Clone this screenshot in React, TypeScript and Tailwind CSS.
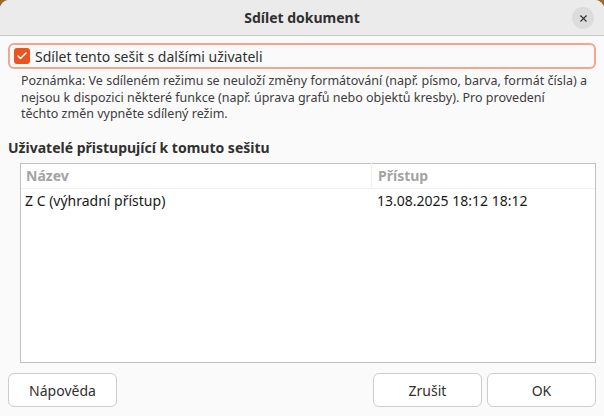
import { X, Check } from "lucide-react";

const font = { fontFamily: '"Noto Sans", "DejaVu Sans", sans-serif' };

const App = () => {
  return (
    <div className="w-[604px] h-[416px] bg-[#9c6a2c]" style={font}>
      <div className="flex h-full flex-col overflow-hidden rounded-t-[9px] bg-[#fafafa] text-[#3d3d3d]">
        {/* Title bar */}
        <div className="relative flex h-[36px] shrink-0 items-center justify-center border-b border-[#c9c9c9] bg-[#ebebeb]">
          <span className="text-[14px] font-bold text-[#303030]">Sdílet dokument</span>
          <button className="absolute right-[10px] top-[7px] flex h-[22px] w-[22px] items-center justify-center rounded-full bg-[#dcdcdc]">
            <X size={11} strokeWidth={2.4} className="text-[#333]" />
          </button>
        </div>

        <div className="flex flex-1 flex-col px-[8px] pt-[7px] pb-[9px]">
          {/* Share checkbox */}
          <label className="flex h-[26px] items-center gap-[5px] rounded-[6px] border-2 border-[#f2a78c] pl-[4px]">
            <span className="flex h-[16px] w-[16px] items-center justify-center rounded-[3px] bg-[#e95420]">
              <Check size={12} strokeWidth={3} className="text-white" />
            </span>
            <span className="text-[14px] text-[#303030]">Sdílet tento sešit s dalšími uživateli</span>
          </label>

          <p className="mt-[4px] pl-[13px] text-[12.5px] leading-[16.5px] text-[#3d3d3d]">
            Poznámka: Ve sdíleném režimu se neuloží změny formátování (např. písmo, barva, formát čísla) a
            <br />
            nejsou k dispozici některé funkce (např. úprava grafů nebo objektů kresby). Pro provedení
            <br />
            těchto změn vypněte sdílený režim.
          </p>

          <h2 className="mt-[14px] text-[14px] font-bold text-[#303030]">
            Uživatelé přistupující k tomuto sešitu
          </h2>

          {/* Users table */}
          <div className="ml-[12px] mt-[5px] h-[200px] border border-[#c0c0c0] bg-white">
            <div className="flex h-[25px] items-center border-b border-[#f2f2f2] text-[14px] font-bold text-[#a3a3a3]">
              <div className="w-[351px] border-r border-[#f0f0f0] pl-[5px] leading-[25px]">Název</div>
              <div className="pl-[6px]">Přístup</div>
            </div>
            <div className="flex h-[24px] items-center text-[14px] text-[#1a1a1a]">
              <div className="w-[351px] pl-[4px]">Z C (výhradní přístup)</div>
              <div className="pl-[5px]">13.08.2025 18:12 18:12</div>
            </div>
          </div>

          {/* Buttons */}
          <div className="mt-auto flex items-center gap-[5px]">
            <button className="h-[34px] w-[109px] rounded-[6px] border border-[#cdcdcd] bg-white text-[14px] text-[#303030]">
              Nápověda
            </button>
            <div className="flex-1" />
            <button className="h-[34px] w-[109px] rounded-[6px] border border-[#cdcdcd] bg-white text-[14px] text-[#303030]">
              Zrušit
            </button>
            <button className="h-[34px] w-[109px] rounded-[6px] border border-[#cdcdcd] bg-white text-[14px] text-[#303030]">
              OK
            </button>
          </div>
        </div>
      </div>
    </div>
  );
};

export default App;
